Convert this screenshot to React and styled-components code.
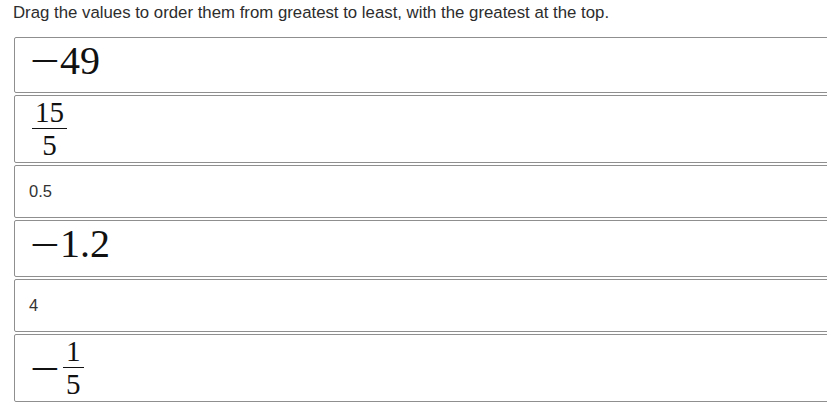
import React from "react"
import styled, { createGlobalStyle } from "styled-components"

const items = [
  { kind: "math", size: "first", parts: [{ minus: true }, { num: "49" }] },
  { kind: "math", size: "tall", parts: [{ frac: ["15", "5"] }] },
  { kind: "text", value: "0.5" },
  { kind: "math", size: "math", parts: [{ minus: true }, { num: "1.2" }] },
  { kind: "text", value: "4" },
  { kind: "math", size: "tall", parts: [{ minus: true }, { frac: ["1", "5"] }] },
]

const App = () => {
  return (
    <Page>
      <GlobalStyle />
      <Prompt>
        Drag the values to order them from greatest to least, with the greatest
        at the top.
      </Prompt>
      <List>
        {items.map((item, i) => (
          <Card key={i} $size={item.kind === "text" ? "text" : item.size}>
            {item.kind === "text" ? (
              <Plain>{item.value}</Plain>
            ) : (
              <Math $raised={item.size !== "tall"}>
                {item.parts.map((p, j) => {
                  if (p.minus) return <Minus key={j}>−</Minus>
                  if (p.num) return <Num key={j}>{p.num}</Num>
                  return (
                    <Frac key={j}>
                      <FracTop>{p.frac[0]}</FracTop>
                      <FracBottom>{p.frac[1]}</FracBottom>
                    </Frac>
                  )
                })}
              </Math>
            )}
          </Card>
        ))}
      </List>
    </Page>
  )
}

export default App

//~~~~~~~~~~~~~~~~~~~
// Styled-Components
//~~~~~~~~~~~~~~~~~~~

const GlobalStyle = createGlobalStyle`
  html, body {
    margin: 0;
    padding: 0;
    overflow: hidden;
    background: #fff;
  }
`

const Page = styled.div`
  padding: 4px 0 0 13px;
  font-family: "Liberation Sans", Arial, sans-serif;
  color: #333;
`

const Prompt = styled.p`
  margin: 0 0 15px 0;
  font-size: 16.8px;
  line-height: 18px;
  color: #2d2d2d;
`

const List = styled.div`
  display: flex;
  flex-direction: column;
  gap: 2px;
  margin-left: 1px;
  width: 830px;
`

const heights = { text: "53px", first: "56px", math: "57px", tall: "68px" }

const Card = styled.div`
  display: flex;
  align-items: center;
  box-sizing: border-box;
  height: ${(p) => heights[p.$size]};
  padding: 0 14px;
  border: 1px solid #8f8f8f;
  border-radius: 2px;
  background: #fff;
`

const Plain = styled.span`
  font-size: 16.5px;
  color: #333;
`

const Math = styled.span`
  display: inline-flex;
  align-items: center;
  margin-bottom: ${(p) => (p.$raised ? "9px" : "0")};
  font-family: "Liberation Serif", "Times New Roman", serif;
  color: #111;
`

const Minus = styled.span`
  display: inline-block;
  font-size: 39px;
  line-height: 1;
  margin-left: 1px;
  transform: scaleX(1.35);
  transform-origin: left center;
  width: 30px;
`

const Num = styled.span`
  font-size: 40px;
  line-height: 1;
`

const Frac = styled.span`
  display: inline-flex;
  flex-direction: column;
  align-items: center;
  font-size: 29px;
  line-height: 1;
  margin-left: 3px;
`

const FracTop = styled.span`
  padding: 0 3px 1px;
  border-bottom: 1.5px solid #111;
`

const FracBottom = styled.span`
  padding-top: 2px;
`
